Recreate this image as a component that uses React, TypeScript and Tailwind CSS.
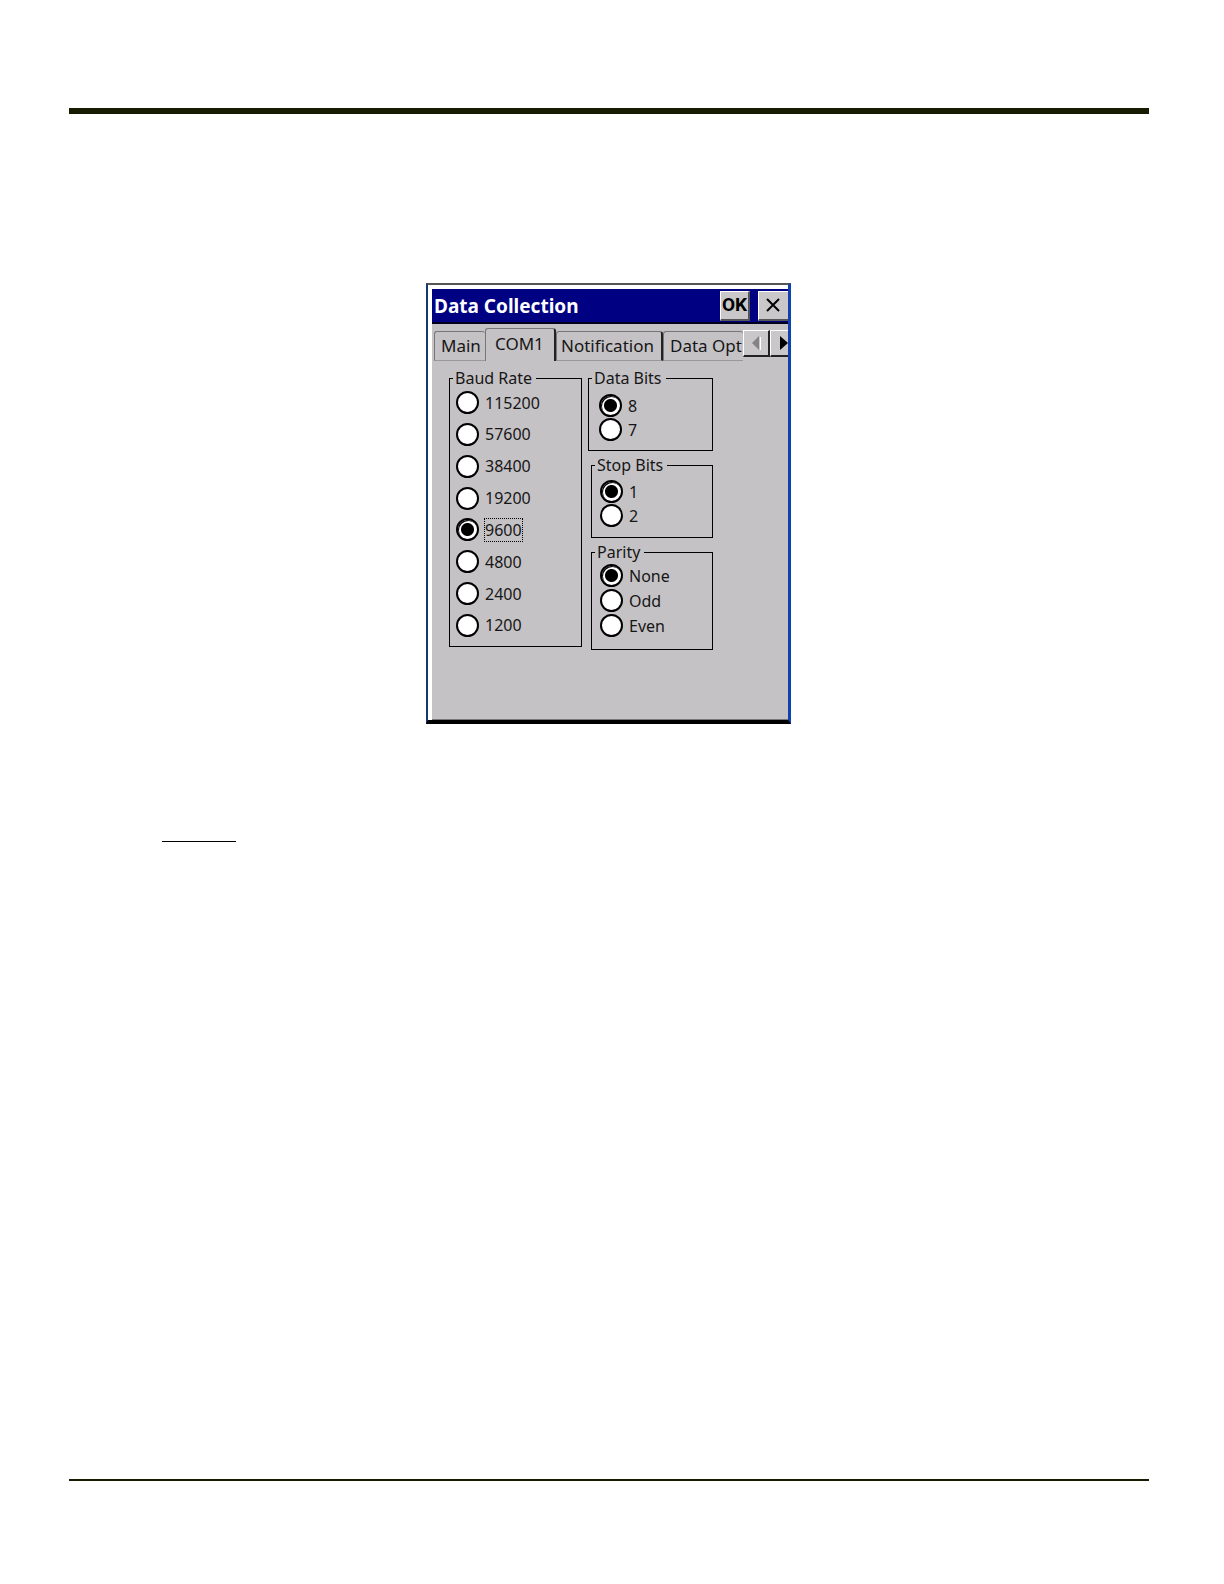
import React, { useState } from "react";

type GroupProps = {
  legend: string;
  name: string;
  options: string[];
  initial: string;
  className: string;
  listClassName: string;
};

function RadioGroup({ legend, name, options, initial, className, listClassName }: GroupProps) {
  const [value, setValue] = useState(initial);
  return (
    <fieldset className={`border border-black ${className}`}>
      <legend className="ml-[3px] pl-[2px] pr-1 text-[16px] leading-[20px]">{legend}</legend>
      <div className={`flex flex-col ${listClassName}`}>
        {options.map((option) => (
          <label key={option} className="flex items-center gap-[5px] text-[16px] leading-[22px]">
            <input
              type="radio"
              name={name}
              value={option}
              checked={value === option}
              onChange={() => setValue(option)}
              className="size-[23px] shrink-0 appearance-none rounded-full border-2 border-black bg-white outline-none checked:bg-[radial-gradient(circle,#000_6px,#fff_7px)] checked:shadow-[inset_1px_1px_0_#000]"
            />
            <span
              className={
                option === "9600" && value === option
                  ? "-my-px border border-dotted border-black"
                  : "-my-px border border-transparent"
              }
            >
              {option}
            </span>
          </label>
        ))}
      </div>
    </fieldset>
  );
}

const raised = "border-t border-l border-t-white border-l-white bg-[#c9c7c9]";

export default function App() {
  const [tab, setTab] = useState("COM1");
  return (
    <main className="flex min-h-screen flex-col bg-white pt-[108px] pr-[75px] pb-[103px] pl-[69px] text-[#161616] [font-family:'Noto_Sans',sans-serif]">
      <div className="h-[6px] shrink-0 bg-[#161b02]" />

      <div className="mt-[169px] flex justify-center pr-px">
        <section
          aria-label="Data Collection"
          className="w-[365px] border-t-2 border-r-[3px] border-b-4 border-l-2 border-t-[#555] border-r-[#0f42ae] border-b-black border-l-[#17386c] bg-white pt-1 pl-1"
        >
          <div className="flex flex-col bg-[#c5c2c5]">
            <header className="flex h-[35px] items-center border-b-2 border-[#00001c] bg-[#000083] pl-[2px] text-white">
              <h1 className="flex-1 text-[19px] leading-[24px] font-bold">Data Collection</h1>
              <button
                type="button"
                className={`mr-2 flex h-[30px] w-[30px] items-center justify-center border-r-2 border-b-2 border-r-[#555] border-b-[#555] text-[19px] font-bold text-black [font-family:Roboto,sans-serif] ${raised}`}
              >
                OK
              </button>
              <button
                type="button"
                aria-label="Close"
                className={`flex h-[30px] w-[30px] items-center justify-center border-b-2 border-b-[#555] pr-[2px] text-black ${raised}`}
              >
                <svg width="14" height="14" viewBox="0 0 14 14" fill="none" stroke="currentColor" strokeWidth="2">
                  <path d="M1 1l12 12M13 1L1 13" />
                </svg>
              </button>
            </header>

            <div className="flex h-[37px] items-end">
              <div role="tablist" className="flex min-w-0 flex-1 items-end overflow-hidden pl-[2px]">
                {[
                  { name: "Main", width: "w-[51px]" },
                  { name: "COM1", width: "w-[71px]" },
                  { name: "Notification", width: "w-[107px]" },
                  { name: "Data Opt", width: "w-[80px]" },
                ].map((t) => (
                  <button
                    key={t.name}
                    type="button"
                    role="tab"
                    aria-selected={tab === t.name}
                    onClick={() => setTab(t.name)}
                    className={`shrink-0 rounded-t-[3px] border-t border-l border-t-[#777] border-l-[#777] text-left text-[17px] leading-[24px] whitespace-nowrap ${t.width} ${
                      tab === t.name
                        ? "h-[33px] border-r-2 border-r-[#222] pb-[2px] pl-[9px]"
                        : t.name === "Notification"
                          ? "h-[30px] border-r-2 border-b border-r-[#222] border-b-[#999] pl-1"
                          : "h-[30px] border-b border-b-[#999] pl-[6px]"
                    }`}
                  >
                    {t.name}
                  </button>
                ))}
              </div>
              <div className="mb-1 flex shrink-0">
                <button
                  type="button"
                  aria-label="Scroll tabs left"
                  className={`flex h-[27px] w-[27px] items-center justify-center border-r-2 border-b-2 border-r-[#222] border-b-[#222] ${raised}`}
                >
                  <svg width="10" height="14" viewBox="0 0 10 14">
                    <path d="M9 1v13L10 14V1z" fill="#fff" />
                    <path d="M8 0v14L1 7z" fill="#858385" />
                  </svg>
                </button>
                <button
                  type="button"
                  aria-label="Scroll tabs right"
                  className={`flex h-[27px] w-[18px] items-center justify-end border-b-2 border-b-[#222] ${raised}`}
                >
                  <svg width="8" height="14" viewBox="0 0 8 14">
                    <path d="M0 0v14L8 7z" fill="#000" />
                  </svg>
                </button>
              </div>
            </div>

            <div role="tabpanel" className="flex items-start gap-[6px] border-b border-[#777] pt-[7px] pb-[69px] pl-[17px]">
              <RadioGroup
                legend="Baud Rate"
                name="baud"
                options={["115200", "57600", "38400", "19200", "9600", "4800", "2400", "1200"]}
                initial="9600"
                className="h-[279px] w-[133px]"
                listClassName="h-[249px] justify-between pl-[6px] pt-[3px]"
              />
              <div className="flex flex-col items-end gap-1">
                <RadioGroup
                  legend="Data Bits"
                  name="data"
                  options={["8", "7"]}
                  initial="8"
                  className="h-[83px] w-[125px]"
                  listClassName="gap-px pt-[6px] pl-[10px]"
                />
                <RadioGroup
                  legend="Stop Bits"
                  name="stop"
                  options={["1", "2"]}
                  initial="1"
                  className="h-[83px] w-[122px]"
                  listClassName="gap-px pt-[5px] pl-2"
                />
                <RadioGroup
                  legend="Parity"
                  name="parity"
                  options={["None", "Odd", "Even"]}
                  initial="None"
                  className="h-[108px] w-[122px]"
                  listClassName="gap-[2px] pt-[2px] pl-2"
                />
              </div>
            </div>
          </div>
        </section>
      </div>

      <div className="mt-[117px] ml-[93px] h-px w-[74px] bg-black" />
      <div className="mt-auto h-[2px] shrink-0 bg-[#161b02]" />
    </main>
  );
}
